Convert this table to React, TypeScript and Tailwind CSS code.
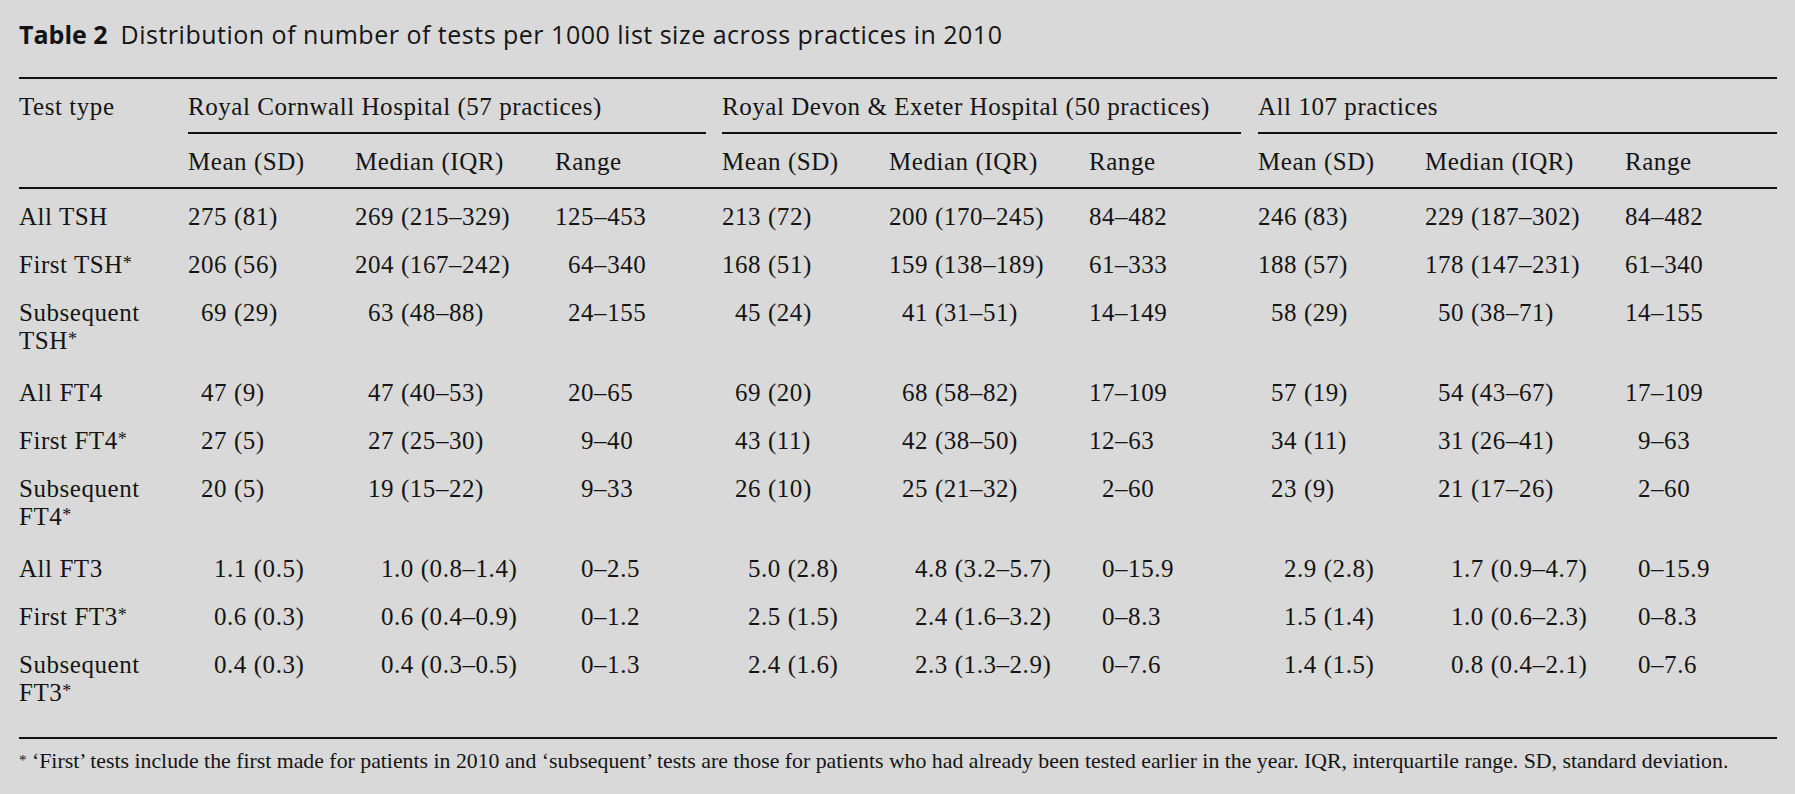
import React from "react";

const COLS =
  "grid grid-cols-[169px_167px_200px_151px_16px_167px_200px_152px_17px_167px_200px_152px]";
const IND = ["", "pl-[13px]", "pl-[26px]"];

type Cell = [string, number];
type Row = { label: string[]; cells: Cell[] };

const rows: Row[] = [
  {
    label: ["All TSH"],
    cells: [
      ["275 (81)", 0], ["269 (215–329)", 0], ["125–453", 0],
      ["213 (72)", 0], ["200 (170–245)", 0], ["84–482", 0],
      ["246 (83)", 0], ["229 (187–302)", 0], ["84–482", 0],
    ],
  },
  {
    label: ["First TSH*"],
    cells: [
      ["206 (56)", 0], ["204 (167–242)", 0], ["64–340", 1],
      ["168 (51)", 0], ["159 (138–189)", 0], ["61–333", 0],
      ["188 (57)", 0], ["178 (147–231)", 0], ["61–340", 0],
    ],
  },
  {
    label: ["Subsequent", "TSH*"],
    cells: [
      ["69 (29)", 1], ["63 (48–88)", 1], ["24–155", 1],
      ["45 (24)", 1], ["41 (31–51)", 1], ["14–149", 0],
      ["58 (29)", 1], ["50 (38–71)", 1], ["14–155", 0],
    ],
  },
  {
    label: ["All FT4"],
    cells: [
      ["47 (9)", 1], ["47 (40–53)", 1], ["20–65", 1],
      ["69 (20)", 1], ["68 (58–82)", 1], ["17–109", 0],
      ["57 (19)", 1], ["54 (43–67)", 1], ["17–109", 0],
    ],
  },
  {
    label: ["First FT4*"],
    cells: [
      ["27 (5)", 1], ["27 (25–30)", 1], ["9–40", 2],
      ["43 (11)", 1], ["42 (38–50)", 1], ["12–63", 0],
      ["34 (11)", 1], ["31 (26–41)", 1], ["9–63", 1],
    ],
  },
  {
    label: ["Subsequent", "FT4*"],
    cells: [
      ["20 (5)", 1], ["19 (15–22)", 1], ["9–33", 2],
      ["26 (10)", 1], ["25 (21–32)", 1], ["2–60", 1],
      ["23 (9)", 1], ["21 (17–26)", 1], ["2–60", 1],
    ],
  },
  {
    label: ["All FT3"],
    cells: [
      ["1.1 (0.5)", 2], ["1.0 (0.8–1.4)", 2], ["0–2.5", 2],
      ["5.0 (2.8)", 2], ["4.8 (3.2–5.7)", 2], ["0–15.9", 1],
      ["2.9 (2.8)", 2], ["1.7 (0.9–4.7)", 2], ["0–15.9", 1],
    ],
  },
  {
    label: ["First FT3*"],
    cells: [
      ["0.6 (0.3)", 2], ["0.6 (0.4–0.9)", 2], ["0–1.2", 2],
      ["2.5 (1.5)", 2], ["2.4 (1.6–3.2)", 2], ["0–8.3", 1],
      ["1.5 (1.4)", 2], ["1.0 (0.6–2.3)", 2], ["0–8.3", 1],
    ],
  },
  {
    label: ["Subsequent", "FT3*"],
    cells: [
      ["0.4 (0.3)", 2], ["0.4 (0.3–0.5)", 2], ["0–1.3", 2],
      ["2.4 (1.6)", 2], ["2.3 (1.3–2.9)", 2], ["0–7.6", 1],
      ["1.4 (1.5)", 2], ["0.8 (0.4–2.1)", 2], ["0–7.6", 1],
    ],
  },
];

function Label({ text }: { text: string }) {
  if (!text.endsWith("*")) return <>{text}</>;
  return (
    <>
      {text.slice(0, -1)}
      <span className="relative -top-[4px] text-[18px]">*</span>
    </>
  );
}

function DataRow({ row }: { row: Row }) {
  const tall = row.label.length > 1;
  const groups = [row.cells.slice(0, 3), row.cells.slice(3, 6), row.cells.slice(6, 9)];
  return (
    <div className={`${COLS} ${tall ? "h-[80px]" : "h-[48px]"} pt-[10px] leading-[28px]`}>
      <div>
        {row.label.map((l, i) => (
          <div key={i}>
            <Label text={l} />
          </div>
        ))}
      </div>
      {groups.map((g, gi) => (
        <React.Fragment key={gi}>
          {g.map(([t, ind], ci) => (
            <div key={ci} className={`${IND[ind]} whitespace-nowrap`}>
              {t}
            </div>
          ))}
          {gi < 2 && <div />}
        </React.Fragment>
      ))}
    </div>
  );
}

export default function App() {
  const sub = ["Mean (SD)", "Median (IQR)", "Range"];
  return (
    <div className="min-h-[794px] w-full bg-[#d9d9d9] text-[#141414] px-[19px] pt-[20px]">
      <div className="font-['Open_Sans',sans-serif] text-[25px] tracking-[0.5px] leading-[28px] whitespace-nowrap">
        <span className="font-bold tracking-normal pr-[13px]">Table 2</span>
        <span>Distribution of number of tests per 1000 list size across practices in 2010</span>
      </div>

      <div className="mt-[29px] w-[1758px] border-t-2 border-[#111] font-['Liberation_Serif',serif] text-[25px] tracking-[0.55px]">
        <div className={`${COLS} leading-[28px]`}>
          <div className="pt-[14px]">Test type</div>
          <div className="col-span-3 pt-[14px] pb-[11px] border-b-2 border-[#111] whitespace-nowrap">
            Royal Cornwall Hospital (57 practices)
          </div>
          <div />
          <div className="col-span-3 pt-[14px] pb-[11px] border-b-2 border-[#111] whitespace-nowrap">
            Royal Devon &amp; Exeter Hospital (50 practices)
          </div>
          <div />
          <div className="col-span-3 pt-[14px] pb-[11px] border-b-2 border-[#111] whitespace-nowrap">
            All 107 practices
          </div>
        </div>
        <div className={`${COLS} leading-[28px] pt-[14px] pb-[11px] border-b-2 border-[#111]`}>
          <div />
          {[0, 1, 2].map((g) => (
            <React.Fragment key={g}>
              {sub.map((s) => (
                <div key={s} className="whitespace-nowrap">
                  {s}
                </div>
              ))}
              {g < 2 && <div />}
            </React.Fragment>
          ))}
        </div>
        <div className="pt-[4px] pb-[16px] border-b-2 border-[#111]">
          {rows.map((r, i) => (
            <DataRow key={i} row={r} />
          ))}
        </div>
        <div className="pt-[10px] text-[21.8px] leading-[24px] tracking-normal whitespace-nowrap">
          <span className="relative -top-[3px] text-[15px]">*</span> ‘First’ tests include the first made for
          patients in 2010 and ‘subsequent’ tests are those for patients who had already been tested earlier in
          the year. IQR, interquartile range. SD, standard deviation.
        </div>
      </div>
    </div>
  );
}
